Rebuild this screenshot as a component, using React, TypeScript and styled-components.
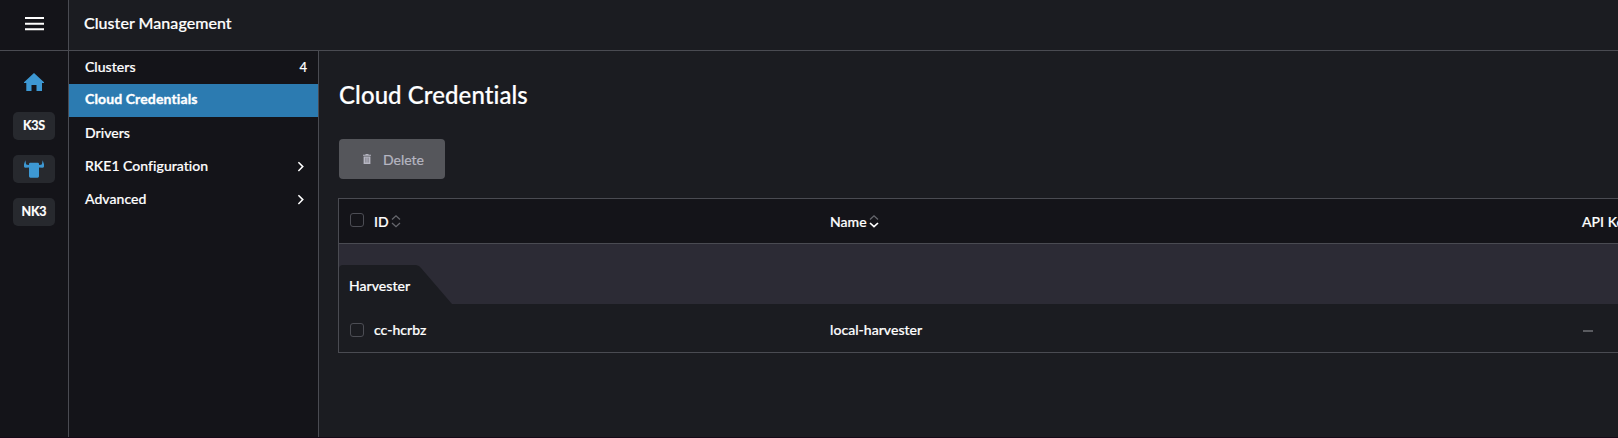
import React from "react";
import styled, { createGlobalStyle } from "styled-components";

const line = "#4a4b52";
const dark = "#141419";
const body = "#1b1c21";
const blue = "#3d98d3";

const GlobalStyle = createGlobalStyle`
  * { box-sizing: border-box; }
  body {
    margin: 0;
    overflow: hidden;
    background: ${body};
    color: #fff;
    font-family: Lato, sans-serif;
    font-size: 14px;
    font-weight: 500;
    letter-spacing: 0.04px;
    font-variant-ligatures: no-common-ligatures;
    -webkit-text-stroke: 0.2px currentColor;
  }
`;

const Shell = styled.div`
  display: flex;
  width: 1618px;
  height: 438px;
  overflow: hidden;
  border-bottom: 1px solid #160a18;
`;

const Rail = styled.nav`
  flex: none;
  width: 69px;
  background: ${dark};
  border-right: 1px solid ${line};
  display: flex;
  flex-direction: column;
  align-items: center;
`;

const MenuButton = styled.div`
  align-self: stretch;
  height: 51px;
  padding: 17px 0 0 25px;
  border-bottom: 1px solid ${line};
  svg { display: block; }
`;

const HomeLink = styled.div`
  margin: 22px 0 21px;
  height: 18px;
  svg { display: block; }
`;

const ClusterBadge = styled.div`
  width: 42px;
  height: 28px;
  margin-bottom: 15px;
  border-radius: 5px;
  background: #27292e;
  display: flex;
  align-items: center;
  justify-content: center;
  font-size: 12.5px;
  font-weight: 700;
  letter-spacing: -0.2px;
  line-height: 28px;
`;

const Workspace = styled.div`
  flex: 1;
  min-width: 0;
  display: flex;
  flex-direction: column;
`;

const Header = styled.header`
  flex: none;
  height: 51px;
  padding: 0 15px;
  border-bottom: 1px solid ${line};
  font-size: 16px;
  letter-spacing: 0.05px;
  line-height: 45px;
`;

const Columns = styled.div`
  flex: 1;
  display: flex;
  min-height: 0;
`;

const SideNav = styled.nav`
  flex: none;
  width: 250px;
  background: ${dark};
  border-right: 1px solid ${line};
`;

const NavItem = styled.div<{ $active?: boolean }>`
  height: 33px;
  padding: 0 11px 0 16px;
  display: flex;
  justify-content: space-between;
  line-height: ${(p) => (p.$active ? 30 : 32)}px;
  background: ${(p) => (p.$active ? "#2c7bb1" : "transparent")};
  font-weight: ${(p) => (p.$active ? 700 : 500)};
  letter-spacing: ${(p) => (p.$active ? 0.12 : 0.04)}px;
  -webkit-text-stroke-width: ${(p) => (p.$active ? 0.35 : 0.2)}px;
`;

const Count = styled.span`
  font-size: 13px;
  line-height: 33px;
`;

const Arrow = styled.svg`
  display: block;
  margin: 11px 3px 0 0;
`;

const Main = styled.main`
  flex: 1;
  min-width: 0;
  padding-left: 19px;
`;

const Title = styled.h1`
  margin: 28px 0 0 1px;
  height: 60px;
  font-size: 24px;
  font-weight: 500;
  line-height: 32px;
  letter-spacing: 0.08px;
`;

const DeleteButton = styled.button`
  display: flex;
  align-items: center;
  width: 106px;
  height: 40px;
  margin: 0 0 19px 1px;
  padding: 0 0 0 24px;
  gap: 12px;
  border: 0;
  border-radius: 4px;
  background: #55565b;
  color: #b6b6c2;
  font: 400 14px/40px Lato, sans-serif;
  svg { display: block; }
`;

const DeleteLabel = styled.span`
  padding-top: 2px;
`;

const Table = styled.section`
  width: 1400px;
  border: 1px solid ${line};
`;

const HeadRow = styled.div`
  display: grid;
  grid-template-columns: 35px 456px 752px 1fr;
  height: 45px;
  background: ${dark};
  border-bottom: 1px solid ${line};
  line-height: 46px;
`;

const DataRow = styled.div`
  display: grid;
  grid-template-columns: 35px 456px 752px 1fr;
  height: 48px;
  line-height: 52px;
`;

const HeadCell = styled.div`
  display: flex;
  gap: 2px;
  svg { display: block; margin-top: 15px; }
`;

const Checkbox = styled.span<{ $top: number }>`
  width: 14px;
  height: 14px;
  margin: ${(p) => p.$top}px 0 0 11px;
  border: 1px solid #4c4d54;
  border-radius: 3px;
`;

const GroupBand = styled.div`
  height: 60px;
  padding-top: 21px;
  background: #2c2b35;
`;

const GroupTab = styled.div`
  width: 114px;
  height: 39px;
  padding-left: 10px;
  line-height: 41px;
  background: ${body};
  border-top-left-radius: 4px;
  clip-path: polygon(0 0, 77px 0, 80px 1px, 82px 3px, 113px 39px, 0 39px);
`;

const Dash = styled.div`
  padding-left: 1px;
  &::before {
    content: "";
    display: block;
    width: 10px;
    height: 2px;
    margin-top: 26px;
    background: #5a5b60;
  }
`;

const Sorter = ({ down }: { down?: boolean }) => (
  <svg width="10" height="16" viewBox="0 0 10 16" fill="none" strokeWidth="1.3">
    <path d="M1 5.5 5 1.8 9 5.5" stroke="#66676d" />
    <path d="M1 9 5 12.7 9 9" stroke={down ? "#fff" : "#66676d"} strokeWidth={down ? 1.7 : 1.3} />
  </svg>
);

const Chevron = () => (
  <Arrow width="7" height="11" viewBox="0 0 7 11" fill="none">
    <path d="M1.4 1.2 5.8 5.6 1.4 10" stroke="#fff" strokeWidth="1.5" />
  </Arrow>
);

export default function App() {
  return (
    <>
      <GlobalStyle />
      <Shell>
        <Rail>
          <MenuButton>
            <svg width="19" height="14" viewBox="0 0 19 14" fill="#fff">
              <path d="M0 0h19v2H0zM0 5.7h19v2H0zM0 11.3h19v2H0z" />
            </svg>
          </MenuButton>
          <HomeLink>
            <svg width="20" height="18" viewBox="0 0 20 18" fill={blue}>
              <path d="M10 0 20 9.2V10h-2v8h-5.5v-6h-5v6H2.3v-8H0v-.8z" />
            </svg>
          </HomeLink>
          <ClusterBadge>K3S</ClusterBadge>
          <ClusterBadge>
            <svg width="20" height="18" viewBox="0 0 20 18" fill={blue}>
              <path d="M1.3.2 2 3.8Q2.2 4.6 3 4.7L5 5V4Q5 2.8 6.2 2.8H13.8Q15 2.8 15 4V5L17 4.7Q17.8 4.6 18 3.8L18.7.2 20 4.3V6.4Q19.8 7.7 18.4 7.7L15 7.4V16.3Q15 17.7 13.6 17.7H6.4Q5 17.7 5 16.3V7.4L1.6 7.7Q.2 7.7 0 6.4V4.3z" />
            </svg>
          </ClusterBadge>
          <ClusterBadge>NK3</ClusterBadge>
        </Rail>
        <Workspace>
          <Header>Cluster Management</Header>
          <Columns>
            <SideNav>
              <NavItem>Clusters<Count>4</Count></NavItem>
              <NavItem $active>Cloud Credentials</NavItem>
              <NavItem>Drivers</NavItem>
              <NavItem>RKE1 Configuration<Chevron /></NavItem>
              <NavItem>Advanced<Chevron /></NavItem>
            </SideNav>
            <Main>
              <Title>Cloud Credentials</Title>
              <DeleteButton>
                <svg width="8" height="10" viewBox="0 0 8 10" fill="#b6b6c2">
                  <path d="M0 .8h2.5V0h3v.8H8v1H0zM.6 2.4h6.8V10H.6z" />
                  <path d="M2.6 3.6v5M4 3.6v5M5.4 3.6v5" stroke="#77777f" strokeWidth=".6" />
                </svg>
                <DeleteLabel>Delete</DeleteLabel>
              </DeleteButton>
              <Table>
                <HeadRow>
                  <Checkbox $top={14} />
                  <HeadCell>ID<Sorter /></HeadCell>
                  <HeadCell>Name<Sorter down /></HeadCell>
                  <HeadCell>API Key</HeadCell>
                </HeadRow>
                <GroupBand>
                  <GroupTab>Harvester</GroupTab>
                </GroupBand>
                <DataRow>
                  <Checkbox $top={19} />
                  <div>cc-hcrbz</div>
                  <div>local-harvester</div>
                  <Dash />
                </DataRow>
              </Table>
            </Main>
          </Columns>
        </Workspace>
      </Shell>
    </>
  );
}
